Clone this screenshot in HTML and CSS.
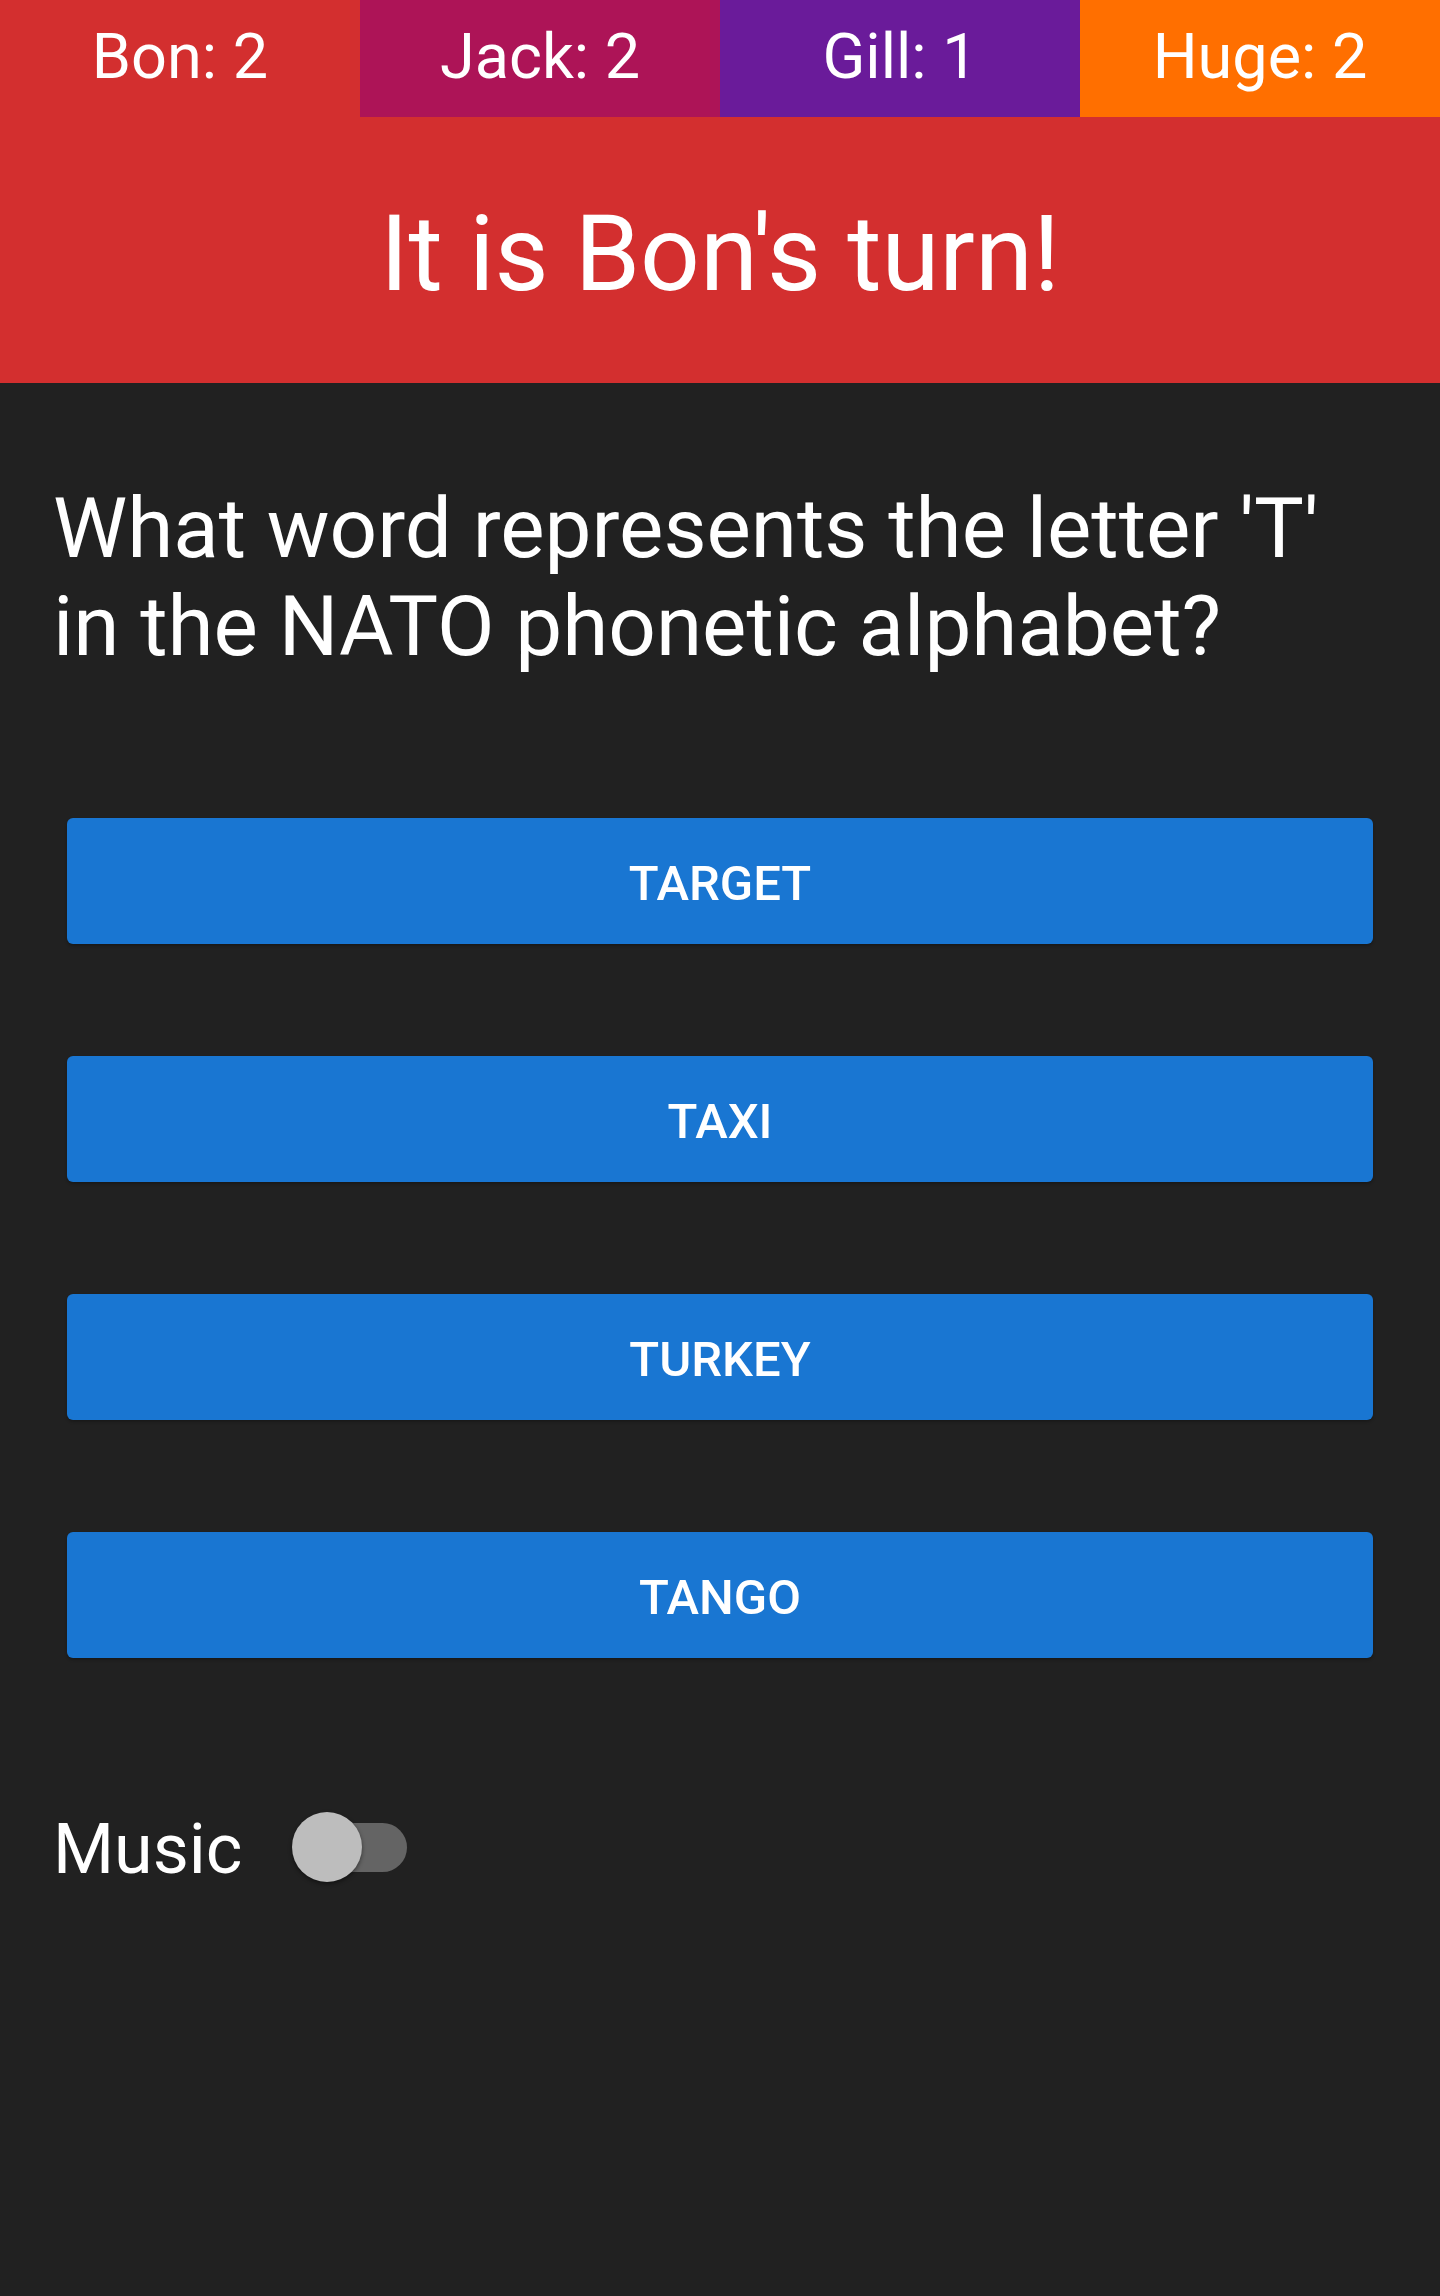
FILE: index.html
```html
<!DOCTYPE html>
<html lang="en">
<head>
<meta charset="utf-8">
<title>Quiz</title>
<link rel="stylesheet" href="styles.css">
</head>
<body>
<div class="app">
  <div class="scores">
    <div class="score score-red">Bon: 2</div>
    <div class="score score-pink">Jack: 2</div>
    <div class="score score-purple">Gill: 1</div>
    <div class="score score-orange">Huge: 2</div>
  </div>
  <div class="turn">It is Bon's turn!</div>
  <div class="content">
    <p class="question">What word represents the letter 'T' in the NATO phonetic alphabet?</p>
    <div class="answers">
      <button class="answer">TARGET</button>
      <button class="answer">TAXI</button>
      <button class="answer">TURKEY</button>
      <button class="answer">TANGO</button>
    </div>
    <div class="music">
      <span class="music-label">Music</span>
      <span class="switch">
        <span class="switch-track"></span>
        <span class="switch-thumb"></span>
      </span>
    </div>
  </div>
</div>
</body>
</html>
```

FILE: styles.css
```css
html, body {
  margin: 0;
  padding: 0;
  background: #212121;
}
body {
  font-family: Roboto, "Liberation Sans", sans-serif;
  color: #ffffff;
}
.app {
  width: 1440px;
  min-height: 2296px;
  background: #212121;
}
.scores {
  display: grid;
  grid-template-columns: repeat(4, 1fr);
  height: 117px;
}
.score {
  font-size: 63px;
  line-height: 74px;
  padding-top: 20px;
  text-align: center;
  box-sizing: border-box;
}
.score-red { background: #d32f2f; }
.score-pink { background: #ad1457; }
.score-purple { background: #6a1b9a; }
.score-orange { background: #ff6f00; }
.turn {
  background: #d32f2f;
  height: 266px;
  box-sizing: border-box;
  padding-top: 76px;
  font-size: 105px;
  line-height: 123px;
  text-align: center;
}
.content {
  padding: 96px 53px 0 53px;
}
.question {
  margin: 0;
  font-size: 83.6px;
  line-height: 98.4px;
}
.answers {
  display: flex;
  flex-direction: column;
  gap: 112px;
  margin-top: 142px;
  padding: 0 14px;
}
.answer {
  height: 126px;
  border: none;
  border-radius: 6px;
  background: #1976d2;
  color: #ffffff;
  font-family: Roboto, "Liberation Sans", sans-serif;
  font-weight: 500;
  font-size: 49px;
  padding: 6px 0 0 0;
  text-align: center;
  box-shadow: 0 2px 3px rgba(0,0,0,0.25);
}
.music {
  display: flex;
  align-items: center;
  margin-top: 150px;
  height: 82px;
}
.music-label {
  font-size: 70px;
  line-height: 82px;
}
.switch {
  position: relative;
  width: 116px;
  height: 70px;
  margin-left: 49px;
  margin-top: -4px;
}
.switch-track {
  position: absolute;
  left: 2px;
  top: 11px;
  width: 113px;
  height: 49px;
  border-radius: 25px;
  background: #646464;
}
.switch-thumb {
  position: absolute;
  left: 0;
  top: 0;
  width: 70px;
  height: 70px;
  border-radius: 50%;
  background: #bdbdbd;
  box-shadow: 0 2px 4px rgba(0,0,0,0.45);
}
```
